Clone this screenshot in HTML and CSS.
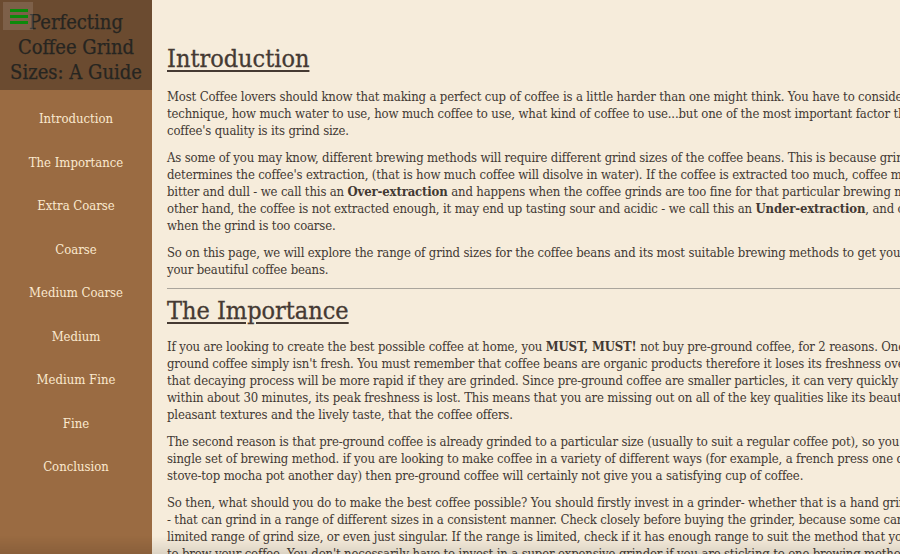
FILE: index.html
```html
<!DOCTYPE html>
<html lang="en">
<head>
<meta charset="utf-8">
<title>Perfecting Coffee Grind Sizes: A Guide</title>
<link rel="stylesheet" href="styles.css">
</head>
<body>
<div class="page">
  <aside class="sidebar">
    <header class="side-head">
      <button class="menu-btn" aria-label="menu">
        <span class="bar"></span><span class="bar"></span><span class="bar"></span>
      </button>
      <h1 class="site-title">Perfecting Coffee Grind Sizes: A Guide</h1>
    </header>
    <nav class="side-nav">
      <a class="nav-link" href="#introduction">Introduction</a>
      <a class="nav-link" href="#importance">The Importance</a>
      <a class="nav-link" href="#extra-coarse">Extra Coarse</a>
      <a class="nav-link" href="#coarse">Coarse</a>
      <a class="nav-link" href="#medium-coarse">Medium Coarse</a>
      <a class="nav-link" href="#medium">Medium</a>
      <a class="nav-link" href="#medium-fine">Medium Fine</a>
      <a class="nav-link" href="#fine">Fine</a>
      <a class="nav-link" href="#conclusion">Conclusion</a>
    </nav>
  </aside>
  <main class="content">
    <section class="section first" id="introduction">
      <h2 class="sec-title">Introduction</h2>
      <p class="para">Most Coffee lovers should know that making a perfect cup of coffee is a little harder than one might think. You have to consider the brewing technique, how much water to use, how much coffee to use, what kind of coffee to use...but one of the most important factor that affects the coffee's quality is its grind size.</p>
      <p class="para">As some of you may know, different brewing methods will require different grind sizes of the coffee beans. This is because grind size determines the coffee's extraction, (that is how much coffee will disolve in water). If the coffee is extracted too much, coffee may taste very bitter and dull - we call this an <b>Over-extraction</b> and happens when the coffee grinds are too fine for that particular brewing method. On the other hand, the coffee is not extracted enough, it may end up tasting sour and acidic - we call this an <b>Under-extraction</b>, and can happen when the grind is too coarse.</p>
      <p class="para">So on this page, we will explore the range of grind sizes for the coffee beans and its most suitable brewing methods to get you the best of your beautiful coffee beans.</p>
    </section>
    <hr class="divider">
    <section class="section" id="importance">
      <h2 class="sec-title">The Importance</h2>
      <p class="para">If you are looking to create the best possible coffee at home, you <b>MUST, MUST!</b> not buy pre-ground coffee, for 2 reasons. One is that pre-ground coffee simply isn't fresh. You must remember that coffee beans are organic products therefore it loses its freshness over time, and that decaying process will be more rapid if they are grinded. Since pre-ground coffee are smaller particles, it can very quickly go stale - within about 30 minutes, its peak freshness is lost. This means that you are missing out on all of the key qualities like its beautiful aroma, pleasant textures and the lively taste, that the coffee offers.</p>
      <p class="para">The second reason is that pre-ground coffee is already grinded to a particular size (usually to suit a regular coffee pot), so you are stuck to a single set of brewing method. if you are looking to make coffee in a variety of different ways (for example, a french press one day, and a stove-top mocha pot another day) then pre-ground coffee will certainly not give you a satisfying cup of coffee.</p>
      <p class="para">So then, what should you do to make the best coffee possible? You should firstly invest in a grinder- whether that is a hand grinder or motor - that can grind in a range of different sizes in a consistent manner. Check closely before buying the grinder, because some can only grind a limited range of grind size, or even just singular. If the range is limited, check if it has enough range to suit the method that you would need to brew your coffee. You don't necessarily have to invest in a super expensive grinder if you are sticking to one brewing method.</p>
    </section>
  </main>
</div>
<div class="bottom-shade"></div>
</body>
</html>
```

FILE: styles.css
```css
html, body {
  margin: 0;
  padding: 0;
  overflow: hidden;
  height: 100%;
}
body {
  background: #f6ecdb;
  font-family: "DejaVu Serif Condensed", "DejaVu Serif", serif;
  font-stretch: condensed;
  color: #423933;
}
.page {
  display: flex;
  min-height: 100vh;
  width: 1100px;
}
.sidebar {
  width: 152px;
  flex: none;
  display: flex;
  flex-direction: column;
  background: #9a6b42;
}
.side-head {
  position: relative;
  height: 90px;
  box-sizing: border-box;
  padding: 10px 4px 0;
  background: #6b4b30;
}
.menu-btn {
  position: absolute;
  left: 3px;
  top: 2px;
  width: 30px;
  height: 28px;
  border: 0;
  background: rgba(255, 255, 255, 0.12);
  display: flex;
  flex-direction: column;
  align-items: flex-start;
  gap: 3.5px;
  padding: 7px 0 0 7px;
  box-sizing: border-box;
}
.bar {
  display: block;
  width: 18px;
  height: 2.5px;
  background: #0b8a0b;
}
.site-title {
  margin: 0;
  font-size: 20px;
  line-height: 25px;
  font-weight: normal;
  text-align: center;
  color: #262521;
  -webkit-text-stroke: 0.25px #262521;
}
.side-nav {
  flex: 1;
  display: flex;
  flex-direction: column;
  padding-top: 7px;
}
.nav-link {
  display: block;
  padding: 13px 0;
  line-height: 17.5px;
  font-size: 13px;
  text-align: center;
  color: #fbe9cf;
  text-decoration: none;
}
.content {
  flex: none;
  width: 820px;
  padding: 0 15px;
}
.section.first {
  padding-top: 44px;
}
.sec-title {
  margin: 0 0 14px;
  font-size: 25px;
  line-height: 30px;
  font-weight: normal;
  text-decoration: underline;
  text-decoration-thickness: 1.5px;
  text-underline-offset: 3px;
  color: #453a33;
  -webkit-text-stroke: 0.3px #453a33;
}
.para {
  margin: 0 0 10px;
  font-size: 13px;
  line-height: 17px;
  letter-spacing: -0.15px;
}
.para b {
  font-weight: bold;
  color: #423933;
}
.divider {
  margin: 10px 0 7px;
  border: 0;
  border-top: 1.5px solid #aaa59c;
}
#importance .sec-title {
  margin-bottom: 12px;
}
.bottom-shade {
  position: fixed;
  left: 0;
  right: 0;
  bottom: 0;
  height: 18px;
  background: linear-gradient(rgba(0, 0, 0, 0), rgba(0, 0, 0, 0.1));
  pointer-events: none;
}
```
